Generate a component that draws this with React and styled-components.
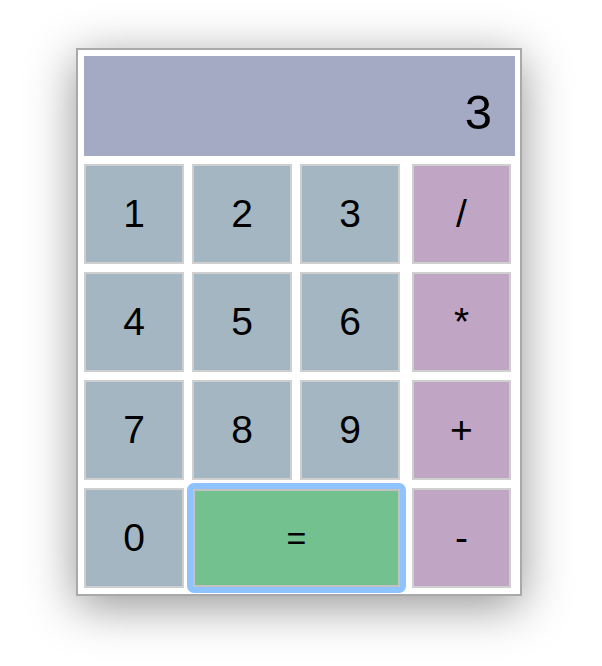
import React from "react";
import styled, { createGlobalStyle } from "styled-components";

const GlobalStyle = createGlobalStyle`
  body {
    margin: 0;
    background: #ffffff;
    font-family: "Liberation Sans", Arial, sans-serif;
  }
`;

const digits = ["1", "2", "3", "4", "5", "6", "7", "8", "9"];
const ops = ["/", "*", "+", "-"];

const App = () => {
  return (
    <Page>
      <GlobalStyle />
      <Calculator>
        <Display>3</Display>
        <Keys>
          <DigitPad>
            {digits.map((d) => (
              <Key key={d}>{d}</Key>
            ))}
            <Key>0</Key>
            <EqualsKey>=</EqualsKey>
          </DigitPad>
          <OpsColumn>
            {ops.map((o) => (
              <Key key={o} $op>
                {o}
              </Key>
            ))}
          </OpsColumn>
        </Keys>
      </Calculator>
    </Page>
  );
};

export default App;

const Page = styled.div`
  width: 602px;
  height: 666px;
  display: flex;
  align-items: flex-start;
  padding: 48px 0 0 76px;
  box-sizing: border-box;
`;

const Calculator = styled.div`
  width: 446px;
  height: 548px;
  box-sizing: border-box;
  border: 2px solid #a9a9a9;
  background: #ffffff;
  padding: 6px 5px 6px 6px;
  display: flex;
  flex-direction: column;
  gap: 8px;
  box-shadow: 0 10px 45px rgba(0, 0, 0, 0.42);
`;

const Display = styled.div`
  height: 100px;
  background: #a5aac4;
  display: flex;
  align-items: center;
  justify-content: flex-end;
  padding: 12px 23px 0 0;
  box-sizing: border-box;
  font-size: 49px;
  color: #000;
`;

const Keys = styled.div`
  display: flex;
  gap: 12px;
`;

const DigitPad = styled.div`
  display: grid;
  grid-template-columns: repeat(3, 100px);
  grid-auto-rows: 100px;
  gap: 8px;
`;

const OpsColumn = styled.div`
  display: grid;
  grid-template-columns: 99px;
  grid-auto-rows: 100px;
  gap: 8px;
`;

const Key = styled.div`
  box-sizing: border-box;
  border: 2px solid #cfcfcf;
  background: ${(p) => (p.$op ? "#c1a5c4" : "#a4b6c1")};
  display: flex;
  align-items: center;
  justify-content: center;
  font-size: 39px;
  color: #000;
`;

const EqualsKey = styled(Key)`
  grid-column: span 2;
  background: #74c190;
  border-color: #c2c2c2;
  border-radius: 1px;
  outline: 6px solid #8ec3ff;
  outline-offset: 0;
  margin: 1px 0 1px 1px;
  font-size: 34px;
`;
